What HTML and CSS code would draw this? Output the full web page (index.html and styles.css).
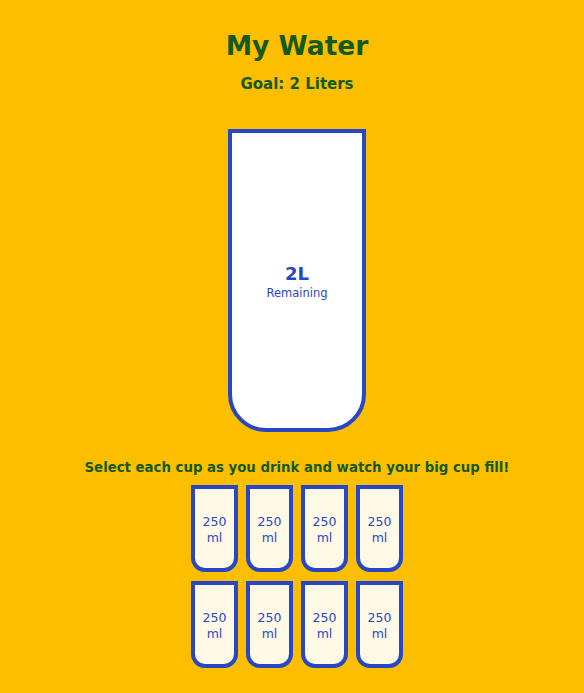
FILE: index.html
```html
<!DOCTYPE html>
<html lang="en">
<head>
<meta charset="UTF-8">
<title>My Water</title>
<link rel="stylesheet" href="styles.css">
</head>
<body>
  <h1 class="title">My Water</h1>
  <h3 class="goal">Goal: 2 Liters</h3>
  <div class="cup">
    <div class="remained">
      <span class="liters">2L</span>
      <small class="remained-label">Remaining</small>
    </div>
  </div>
  <p class="text">Select each cup as you drink and watch your big cup fill!</p>
  <div class="cups">
    <div class="cup-small">250<br>ml</div>
    <div class="cup-small">250<br>ml</div>
    <div class="cup-small">250<br>ml</div>
    <div class="cup-small">250<br>ml</div>
    <div class="cup-small">250<br>ml</div>
    <div class="cup-small">250<br>ml</div>
    <div class="cup-small">250<br>ml</div>
    <div class="cup-small">250<br>ml</div>
  </div>
</body>
</html>
```
FILE: styles.css
```css
* { box-sizing: border-box; }
body {
  margin: 0;
  padding-left: 10px;
  background: #fdbe00;
  color: #145a1e;
  font-family: "DejaVu Sans", "Open Sans", sans-serif;
  display: flex;
  flex-direction: column;
  align-items: center;
}
.title {
  margin: 30px 0 0;
  font-size: 26.5px;
  line-height: 32px;
  font-weight: bold;
}
.goal {
  margin: 12px 0 0;
  font-size: 15px;
  line-height: 20px;
  font-weight: bold;
}
.cup {
  margin-top: 35px;
  width: 138px;
  height: 303px;
  background: #fff;
  border: 4px solid #2747c4;
  border-radius: 0 0 38px 38px;
  color: #2747c4;
  display: flex;
  flex-direction: column;
}
.remained {
  flex: 1;
  display: flex;
  flex-direction: column;
  align-items: center;
  justify-content: center;
  gap: 2px;
  padding-top: 2px;
}
.liters {
  font-size: 18px;
  font-weight: bold;
  line-height: 20px;
}
.remained-label {
  font-size: 11.5px;
  line-height: 14px;
}
.text {
  margin: 27px 0 0;
  font-size: 13.3px;
  line-height: 18px;
  font-weight: bold;
}
.cups {
  margin-top: 8px;
  width: 220px;
  display: flex;
  flex-wrap: wrap;
  justify-content: center;
  gap: 9px 8px;
}
.cup-small {
  width: 47px;
  height: 87px;
  background: #fff9e6;
  border: 4px solid #2747c4;
  border-radius: 0 0 14px 14px;
  color: #2747c4;
  font-size: 12.5px;
  line-height: 16px;
  padding-top: 2px;
  display: flex;
  align-items: center;
  justify-content: center;
  text-align: center;
}
```
